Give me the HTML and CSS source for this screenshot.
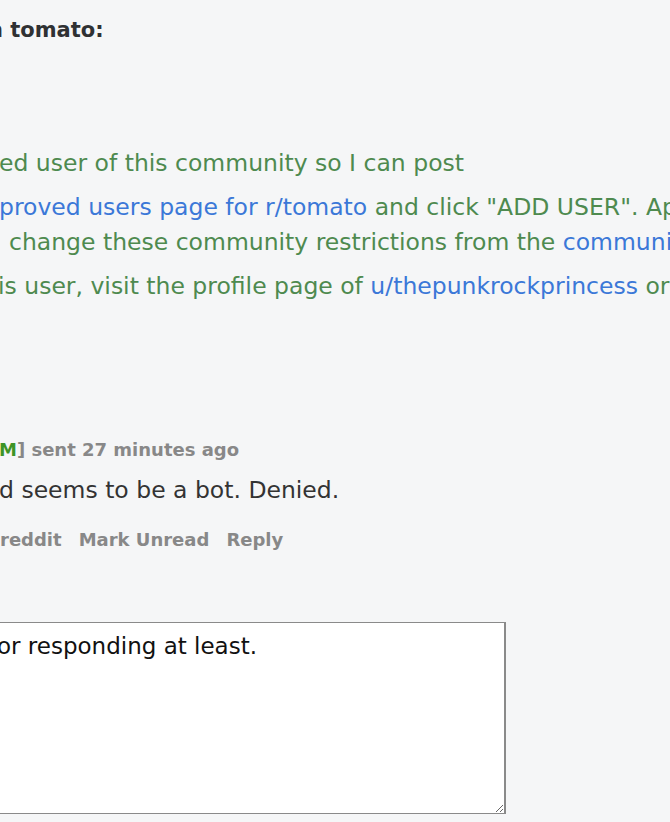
FILE: index.html
```html
<!DOCTYPE html>
<html lang="en">
<head>
<meta charset="utf-8">
<title>Message</title>
<link rel="stylesheet" href="styles.css">
</head>
<body>
<div class="page">
  <div class="title">n tomato:</div>
  <div class="notice">
    <p class="line l1">ed user of this community so I can post</p>
    <div class="para">
      <p class="line l2"><a class="link">proved users page for r/tomato</a> and click "ADD USER". Approved users can</p>
      <p class="line l3">change these community restrictions from the <a class="link">community settings</a></p>
    </div>
    <p class="line l4">is user, visit the profile page of <a class="link">u/thepunkrockprincess</a> or</p>
  </div>
  <div class="reply-msg">
    <div class="tagline"><span class="mod">M</span>] sent 27 minutes ago</div>
    <div class="body">d seems to be a bot. Denied.</div>
    <ul class="actions">
      <li>reddit</li>
      <li>Mark Unread</li>
      <li>Reply</li>
    </ul>
  </div>
  <textarea class="editor">or responding at least.</textarea>
</div>
</body>
</html>
```
FILE: styles.css
```css
html, body {
  margin: 0;
  padding: 0;
  background: #f5f6f7;
  overflow: hidden;
}
.page {
  width: 670px;
  height: 822px;
  overflow: hidden;
  font-family: "DejaVu Sans", Verdana, sans-serif;
  color: #333;
}
.title {
  font-weight: bold;
  font-size: 21px;
  line-height: 30px;
  padding-top: 15px;
  text-indent: -12px;
  white-space: nowrap;
  color: #2f3133;
}
.notice {
  margin-top: 101px;
  color: #4e8a4f;
  font-size: 23.5px;
}
.line {
  margin: 0;
  line-height: 35px;
  white-space: nowrap;
}
.para {
  margin: 9px 0;
}
.l1 { text-indent: -1px; }
.l2 { text-indent: -1px; }
.l3 { text-indent: 9px; }
.l4 { text-indent: -2px; }
.link {
  color: #3b78d8;
  text-decoration: none;
}
.reply-msg {
  margin-top: 131px;
}
.tagline {
  font-weight: bold;
  font-size: 18px;
  line-height: 30px;
  color: #888;
  white-space: nowrap;
  text-indent: -1px;
}
.mod {
  color: #3e9426;
}
.body {
  margin-top: 10px;
  font-size: 23.5px;
  line-height: 30px;
  color: #333;
  white-space: nowrap;
  text-indent: -1px;
}
.actions {
  display: flex;
  gap: 17px;
  list-style: none;
  margin: 20px 0 0;
  padding: 0;
  font-weight: bold;
  font-size: 18px;
  line-height: 30px;
  color: #888;
  white-space: nowrap;
}
.editor {
  display: block;
  box-sizing: border-box;
  margin: 67px 0 0 -20px;
  width: 526px;
  height: 192px;
  padding: 8px 4px;
  border: 1px solid #8a8a8a;
  border-right-width: 2px;
  background: #fff;
  color: #111;
  font-family: "DejaVu Sans", Verdana, sans-serif;
  font-size: 23px;
  line-height: 30px;
  text-indent: 12px;
  resize: both;
  outline: none;
}
```
